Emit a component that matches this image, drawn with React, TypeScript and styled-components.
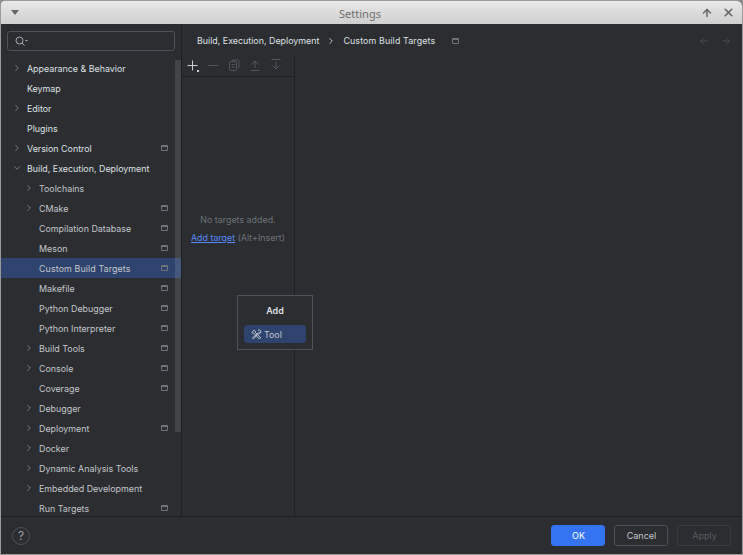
import styled, { createGlobalStyle } from "styled-components";
import { ArrowLeft, ArrowRight, ArrowUp, ChevronDown, ChevronRight, X } from "lucide-react";

const GlobalStyle = createGlobalStyle`
  html, body {
    margin: 0;
    padding: 0;
    background: #8a8a8a;
  }
  * {
    box-sizing: border-box;
  }
`;

const Window = styled.div`
  position: relative;
  width: 743px;
  height: 555px;
  display: flex;
  flex-direction: column;
  overflow: hidden;
  background: #2b2d30;
  border: 1px solid #9a9a9a;
  border-radius: 4px 6px 0 0;
  color: #dfe1e5;
  font-family: Inter, "Open Sans", sans-serif;
  font-size: 8.9px;
`;

const TitleBar = styled.div`
  height: 23px;
  flex: none;
  display: flex;
  align-items: center;
  justify-content: space-between;
  padding: 0 7px 0 10px;
  background: linear-gradient(#e8e8e8, #cfcfcf);
`;

const MenuArrow = styled.span`
  width: 0;
  height: 0;
  border-left: 4px solid transparent;
  border-right: 4px solid transparent;
  border-top: 5px solid #666;
`;

const TitleText = styled.span`
  flex: 1;
  text-align: center;
  color: #6e6e6e;
  font-family: "Noto Sans", sans-serif;
  font-size: 11px;
  padding-top: 2px;
`;

const TitleButtons = styled.div`
  display: flex;
  align-items: center;
  gap: 9px;
  color: #666;
`;

const Main = styled.div`
  flex: 1;
  min-height: 0;
  display: flex;
`;

const Sidebar = styled.div`
  position: relative;
  width: 181px;
  flex: none;
  border-right: 1px solid #1e1f22;
  display: flex;
  flex-direction: column;
  overflow: hidden;
`;

const SearchBox = styled.div`
  margin: 7px 6px 7px 6px;
  height: 20px;
  flex: none;
  border: 1px solid #4e5157;
  border-radius: 3px;
  display: flex;
  align-items: center;
  padding-left: 7px;
  color: #a8adb5;
`;

const TreeList = styled.div`
  flex: 1;
  min-height: 0;
  overflow: hidden;
`;

const Row = styled.div<{ $depth: number; $selected?: boolean }>`
  height: 20px;
  display: flex;
  align-items: center;
  padding-left: ${(p) => (p.$depth === 0 ? 11 : 23)}px;
  padding-right: 13px;
  background: ${(p) => (p.$selected ? "#2e436e" : "transparent")};
  color: ${(p) => (p.$depth === 0 ? "#dfe1e5" : "#c4c7cc")};
  letter-spacing: ${(p) => (p.$selected ? "0.1px" : "normal")};
`;

const Arrow = styled.span`
  width: 15px;
  flex: none;
  display: flex;
  align-items: center;
  color: #a8abb2;
`;

const RowLabel = styled.span`
  flex: 1;
  white-space: nowrap;
`;

const ProjectMark = styled.span`
  width: 7px;
  height: 6px;
  flex: none;
  border: 1px solid #6f737a;
  border-top-width: 2px;
  border-radius: 1px;
`;

const ScrollThumb = styled.div`
  position: absolute;
  top: 36px;
  right: 0;
  width: 6px;
  height: 372px;
  background: rgba(255, 255, 255, 0.11);
`;

const Content = styled.div`
  flex: 1;
  min-width: 0;
  display: flex;
  flex-direction: column;
`;

const Breadcrumbs = styled.div`
  height: 33px;
  flex: none;
  display: flex;
  align-items: center;
  padding: 0 10px 0 15px;
  color: #dfe1e5;
  white-space: nowrap;
`;

const CrumbArrow = styled.span`
  display: flex;
  margin: 0 7px 0 7px;
  color: #dfe1e5;
`;

const CrumbCurrent = styled.span`
  letter-spacing: 0.12px;
`;

const CrumbMark = styled(ProjectMark)`
  margin-left: 17px;
`;

const CrumbSpacer = styled.div`
  flex: 1;
`;

const NavArrows = styled.div`
  display: flex;
  gap: 10px;
  color: #4a4c50;
`;

const Body = styled.div`
  flex: 1;
  min-height: 0;
  display: flex;
`;

const TargetsPanel = styled.div`
  width: 113px;
  flex: none;
  display: flex;
  flex-direction: column;
  border-right: 1px solid #1e1f22;
`;

const Toolbar = styled.div`
  height: 20px;
  flex: none;
  display: flex;
  align-items: center;
  gap: 5px;
  padding: 0 0 3px 2px;
  border-bottom: 1px solid #1e1f22;
`;

const ToolButton = styled.span<{ $active?: boolean }>`
  position: relative;
  width: 16px;
  height: 16px;
  display: flex;
  align-items: center;
  justify-content: center;
  color: ${(p) => (p.$active ? "#ced0d6" : "#55575c")};
`;

const AddDot = styled.span`
  position: absolute;
  right: 1px;
  bottom: 1px;
  width: 2px;
  height: 2px;
  background: #ced0d6;
`;

const EmptyState = styled.div`
  flex: 1;
  display: flex;
  flex-direction: column;
  align-items: center;
  padding-top: 137px;
  gap: 7px;
  color: #6f737a;
  white-space: nowrap;
`;

const AddLink = styled.span`
  color: #548af7;
  text-decoration: underline;
`;

const Popup = styled.div`
  position: absolute;
  left: 236px;
  top: 294px;
  width: 76px;
  height: 55px;
  padding: 6px;
  background: #2b2d30;
  border: 1px solid #4e5157;
  display: flex;
  flex-direction: column;
  align-items: center;
`;

const PopupTitle = styled.div`
  height: 17px;
  margin-bottom: 6px;
  display: flex;
  align-items: center;
  font-weight: 600;
  color: #dfe1e5;
`;

const PopupItem = styled.div`
  width: 62px;
  height: 18px;
  border-radius: 3px;
  background: #2e436e;
  display: flex;
  align-items: center;
  gap: 2px;
  padding-left: 7px;
  color: #c4c7cc;
`;

const Footer = styled.div`
  height: 38px;
  flex: none;
  border-top: 1px solid #1e1f22;
  display: flex;
  align-items: center;
  justify-content: space-between;
  padding: 0 11px;
`;

const HelpButton = styled.div`
  width: 18px;
  height: 18px;
  border: 1px solid #4e5157;
  border-radius: 50%;
  display: flex;
  align-items: center;
  justify-content: center;
  font-size: 12px;
  color: #9da0a8;
`;

const FooterButtons = styled.div`
  display: flex;
  gap: 9px;
`;

const DialogButton = styled.button<{ $kind?: "primary" | "disabled" }>`
  width: 54px;
  height: 21px;
  padding: 0 0 0 1px;
  border-radius: 3px;
  font-family: inherit;
  font-size: 9px;
  border: 1px solid
    ${(p) => (p.$kind === "primary" ? "#3574f0" : p.$kind === "disabled" ? "#393b40" : "#4e5157")};
  background: ${(p) => (p.$kind === "primary" ? "#3574f0" : "transparent")};
  color: ${(p) => (p.$kind === "primary" ? "#ffffff" : p.$kind === "disabled" ? "#5a5d63" : "#c4c7cc")};
`;

type TreeItem = {
  label: string;
  depth: number;
  arrow?: "right" | "down";
  mark?: boolean;
  selected?: boolean;
};

const items: TreeItem[] = [
  { label: "Appearance & Behavior", depth: 0, arrow: "right" },
  { label: "Keymap", depth: 0 },
  { label: "Editor", depth: 0, arrow: "right" },
  { label: "Plugins", depth: 0 },
  { label: "Version Control", depth: 0, arrow: "right", mark: true },
  { label: "Build, Execution, Deployment", depth: 0, arrow: "down" },
  { label: "Toolchains", depth: 1, arrow: "right" },
  { label: "CMake", depth: 1, arrow: "right", mark: true },
  { label: "Compilation Database", depth: 1, mark: true },
  { label: "Meson", depth: 1, mark: true },
  { label: "Custom Build Targets", depth: 1, mark: true, selected: true },
  { label: "Makefile", depth: 1, mark: true },
  { label: "Python Debugger", depth: 1, mark: true },
  { label: "Python Interpreter", depth: 1, mark: true },
  { label: "Build Tools", depth: 1, arrow: "right", mark: true },
  { label: "Console", depth: 1, arrow: "right", mark: true },
  { label: "Coverage", depth: 1, mark: true },
  { label: "Debugger", depth: 1, arrow: "right" },
  { label: "Deployment", depth: 1, arrow: "right", mark: true },
  { label: "Docker", depth: 1, arrow: "right" },
  { label: "Dynamic Analysis Tools", depth: 1, arrow: "right" },
  { label: "Embedded Development", depth: 1, arrow: "right" },
  { label: "Run Targets", depth: 1, mark: true },
];

const SearchIcon = () => (
  <svg width="14" height="10" viewBox="0 0 14 10" fill="none">
    <circle cx="4.5" cy="4.5" r="3.5" stroke="currentColor" />
    <path d="M7 7l2.5 2.5" stroke="currentColor" />
    <path d="M10 4h3l-1.5 1.5z" fill="currentColor" />
  </svg>
);

const PlusIcon = () => (
  <svg width="11" height="11" viewBox="0 0 11 11" fill="none" stroke="currentColor">
    <path d="M5.5 .5v10M.5 5.5h10" />
  </svg>
);

const MinusIcon = () => (
  <svg width="10" height="11" viewBox="0 0 10 11" fill="none" stroke="currentColor">
    <path d="M0 5.5h10" />
  </svg>
);

const CopyIcon = () => (
  <svg width="12" height="12" viewBox="0 0 12 12" fill="none" stroke="currentColor">
    <rect x="1.5" y="2.5" width="7" height="9" rx="1" />
    <path d="M3.5 1h6a1.5 1.5 0 0 1 1.5 1.5V9" />
    <path d="M3.5 5.5h3M3.5 8h3" />
  </svg>
);

const MoveUpIcon = () => (
  <svg width="12" height="12" viewBox="0 0 12 12" fill="none" stroke="currentColor">
    <path d="M6 9V2M2.5 5.5L6 2l3.5 3.5M1.5 11.5h9" />
  </svg>
);

const MoveDownIcon = () => (
  <svg width="12" height="12" viewBox="0 0 12 12" fill="none" stroke="currentColor">
    <path d="M6 3v7M2.5 6.5L6 10l3.5-3.5M1.5 .5h9" />
  </svg>
);

const ToolIcon = () => (
  <svg width="11" height="11" viewBox="0 0 11 11" fill="none" stroke="currentColor" strokeWidth="1">
    <path d="M1 3.2L3.2 1l1.2 1.2-.6.6 5.9 5.9-1.3 1.3-5.9-5.9-.6.6z" />
    <path d="M7 1.2a2 2 0 0 1 2.8 2.6L8.8 2.9 8 3.7l.9.9a2 2 0 0 1-2.3-.3L1.6 8.8a.9.9 0 0 0 .9.9l4.2-4.4" />
  </svg>
);

export default function App() {
  return (
    <>
      <GlobalStyle />
      <Window>
        <TitleBar>
          <MenuArrow />
          <TitleText>Settings</TitleText>
          <TitleButtons>
            <ArrowUp size={12} strokeWidth={3} />
            <X size={13} strokeWidth={3} />
          </TitleButtons>
        </TitleBar>
        <Main>
          <Sidebar>
            <SearchBox>
              <SearchIcon />
            </SearchBox>
            <TreeList>
              {items.map((item) => (
                <Row key={item.label} $depth={item.depth} $selected={item.selected}>
                  <Arrow>
                    {item.arrow === "right" && <ChevronRight size={10} strokeWidth={1.5} />}
                    {item.arrow === "down" && <ChevronDown size={10} strokeWidth={1.5} />}
                  </Arrow>
                  <RowLabel>{item.label}</RowLabel>
                  {item.mark && <ProjectMark />}
                </Row>
              ))}
            </TreeList>
            <ScrollThumb />
          </Sidebar>
          <Content>
            <Breadcrumbs>
              <span>Build, Execution, Deployment</span>
              <CrumbArrow>
                <ChevronRight size={10} strokeWidth={2} />
              </CrumbArrow>
              <CrumbCurrent>Custom Build Targets</CrumbCurrent>
              <CrumbMark />
              <CrumbSpacer />
              <NavArrows>
                <ArrowLeft size={12} />
                <ArrowRight size={12} />
              </NavArrows>
            </Breadcrumbs>
            <Body>
              <TargetsPanel>
                <Toolbar>
                  <ToolButton $active>
                    <PlusIcon />
                    <AddDot />
                  </ToolButton>
                  <ToolButton>
                    <MinusIcon />
                  </ToolButton>
                  <ToolButton>
                    <CopyIcon />
                  </ToolButton>
                  <ToolButton>
                    <MoveUpIcon />
                  </ToolButton>
                  <ToolButton>
                    <MoveDownIcon />
                  </ToolButton>
                </Toolbar>
                <EmptyState>
                  <span>No targets added.</span>
                  <span>
                    <AddLink>Add target</AddLink> (Alt+Insert)
                  </span>
                </EmptyState>
              </TargetsPanel>
            </Body>
          </Content>
        </Main>
        <Footer>
          <HelpButton>?</HelpButton>
          <FooterButtons>
            <DialogButton $kind="primary">OK</DialogButton>
            <DialogButton>Cancel</DialogButton>
            <DialogButton $kind="disabled">Apply</DialogButton>
          </FooterButtons>
        </Footer>
        <Popup>
          <PopupTitle>Add</PopupTitle>
          <PopupItem>
            <ToolIcon />
            Tool
          </PopupItem>
        </Popup>
      </Window>
    </>
  );
}
